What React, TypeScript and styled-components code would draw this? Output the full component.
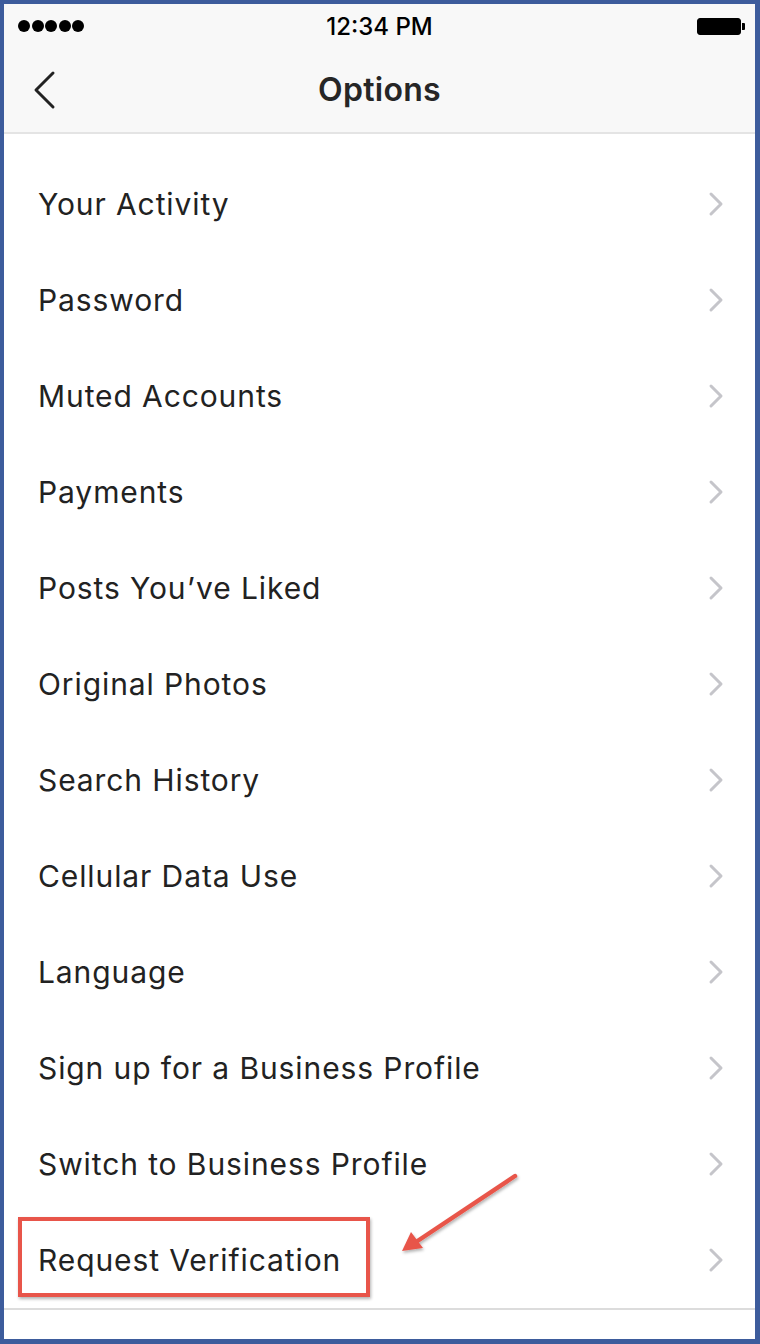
import * as React from 'react';
import styled, { createGlobalStyle } from 'styled-components';

const GlobalStyle = createGlobalStyle`
  html, body {
    margin: 0;
    padding: 0;
    background: #3d5c9c;
  }
  body {
    font-family: Inter, "Open Sans", "Liberation Sans", sans-serif;
  }
`;

const items = [
  'Your Activity',
  'Password',
  'Muted Accounts',
  'Payments',
  'Posts You’ve Liked',
  'Original Photos',
  'Search History',
  'Cellular Data Use',
  'Language',
  'Sign up for a Business Profile',
  'Switch to Business Profile',
  'Request Verification',
];

export default function App() {
  return (
    <>
      <GlobalStyle />
      <Frame>
        <Screen>
          <Header>
            <StatusBar>
              <Signal>
                {[0, 1, 2, 3, 4].map(i => (
                  <Dot key={i} />
                ))}
              </Signal>
              <Time>12:34 PM</Time>
              <Battery>
                <BatteryBody />
                <BatteryTip />
              </Battery>
            </StatusBar>
            <NavBar>
              <BackButton>
                <svg width="26" height="40" viewBox="0 0 26 40">
                  <path
                    d="M22 3 L5 20 L22 37"
                    fill="none"
                    stroke="#222"
                    strokeWidth="3"
                    strokeLinecap="round"
                    strokeLinejoin="round"
                  />
                </svg>
              </BackButton>
              <Title>Options</Title>
            </NavBar>
          </Header>
          <List>
            {items.map((label, i) => (
              <Row key={label}>
                <Label highlight={i === items.length - 1}>{label}</Label>
                <Chevron>
                  <svg width="16" height="26" viewBox="0 0 16 26">
                    <path
                      d="M3 3 L13 13 L3 23"
                      fill="none"
                      stroke="#c5c5ca"
                      strokeWidth="3"
                      strokeLinecap="round"
                      strokeLinejoin="round"
                    />
                  </svg>
                </Chevron>
              </Row>
            ))}
          </List>
          <Footer />
          <Arrow width="140" height="100" viewBox="0 0 140 100">
            <defs>
              <filter id="sh" x="-20%" y="-20%" width="140%" height="140%">
                <feDropShadow dx="1" dy="2" stdDeviation="1.5" floodColor="#000" floodOpacity="0.3" />
              </filter>
            </defs>
            <g filter="url(#sh)">
              <path
                d="M125 16 L26 82"
                stroke="#e8554a"
                strokeWidth="4.5"
                strokeLinecap="round"
              />
              <path d="M12 91 L21 72 L33 88 Z" fill="#e8554a" />
            </g>
          </Arrow>
        </Screen>
      </Frame>
    </>
  );
}

const Frame = styled.div`
  width: 760px;
  height: 1344px;
  box-sizing: border-box;
  padding: 4px 5px 5px 4px;
  background: #3d5c9c;
`;

const Screen = styled.div`
  position: relative;
  height: 100%;
  background: #ffffff;
  display: flex;
  flex-direction: column;
  overflow: hidden;
`;

const Header = styled.div`
  background: #f8f8f8;
  border-bottom: 2px solid #e4e4e4;
`;

const StatusBar = styled.div`
  height: 44px;
  display: flex;
  align-items: center;
  justify-content: space-between;
  padding: 0 10px 0 14px;
  position: relative;
`;

const Signal = styled.div`
  display: flex;
  gap: 1.5px;
`;

const Dot = styled.span`
  width: 12px;
  height: 12px;
  border-radius: 50%;
  background: #000;
`;

const Time = styled.div`
  position: absolute;
  left: 0;
  right: 0;
  text-align: center;
  font-size: 24px;
  font-weight: 500;
  color: #000;
`;

const Battery = styled.div`
  display: flex;
  align-items: center;
`;

const BatteryBody = styled.div`
  width: 44px;
  height: 17px;
  box-sizing: border-box;
  border: 1.5px solid #000;
  border-radius: 3px;
  background: #000;
`;

const BatteryTip = styled.div`
  width: 3px;
  height: 7px;
  margin-left: 1px;
  background: #000;
  border-radius: 0 1px 1px 0;
`;

const NavBar = styled.div`
  height: 84px;
  position: relative;
  display: flex;
  align-items: center;
  justify-content: center;
`;

const BackButton = styled.div`
  position: absolute;
  left: 27px;
  top: 22px;
  display: flex;
`;

const Title = styled.div`
  font-size: 32px;
  font-weight: 600;
  letter-spacing: 0.3px;
  color: #262626;
  margin-bottom: 2px;
`;

const List = styled.div`
  padding-top: 22px;
  display: flex;
  flex-direction: column;
  border-bottom: 2px solid #dcdcdc;
`;

const Row = styled.div`
  height: 96px;
  display: flex;
  align-items: center;
  justify-content: space-between;
  padding: 0 31px 0 34px;
`;

const Label = styled.span<{ highlight?: boolean }>`
  position: relative;
  font-size: 30px;
  line-height: 36px;
  color: #222;
  letter-spacing: 0.9px;

  ${p =>
    p.highlight &&
    `
    &::after {
      content: '';
      position: absolute;
      left: -20px;
      top: -25px;
      width: 344px;
      height: 72px;
      border: 4px solid #e8554a;
      box-shadow: 1px 2px 3px rgba(0, 0, 0, 0.3);
    }
  `}
`;

const Chevron = styled.span`
  display: flex;
`;

const Footer = styled.div`
  flex: 1;
`;

const Arrow = styled.svg`
  position: absolute;
  left: 386px;
  top: 1156px;
`;
